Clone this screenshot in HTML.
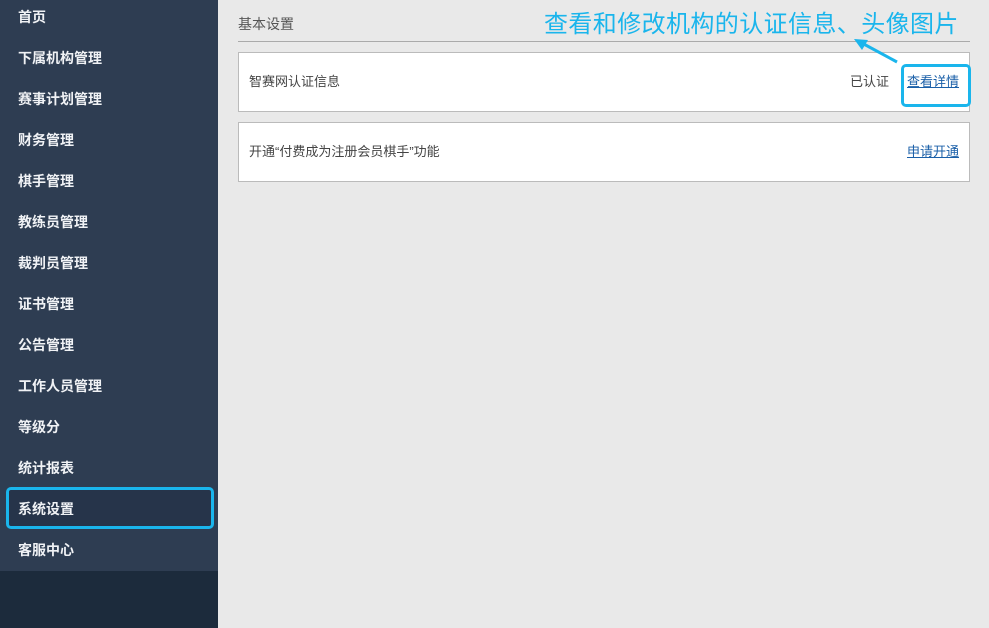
<!DOCTYPE html>
<html><head><meta charset="utf-8"><style>
*{margin:0;padding:0;box-sizing:border-box}
body{width:989px;height:628px;background:#e9e9e9;font-family:"Liberation Sans","Noto Sans CJK SC",sans-serif;position:relative;overflow:hidden}
.side{position:absolute;left:0;top:0;width:218px;height:628px;background:#1c2b3c}
.menu{position:absolute;left:0;top:0;width:218px;height:571px;background:#2e3d52}
.it{position:absolute;left:18px;font-size:14px;font-weight:bold;color:#f0f2f5;line-height:20px}
.sel{position:absolute;left:6px;top:487px;width:208px;height:42px;border:3px solid #1ab5ec;border-radius:5px;background:#26344a}
.main{position:absolute;left:218px;top:0;right:0;bottom:0}
.t{position:absolute;left:20px;top:14px;font-size:14px;color:#555}
.hr{position:absolute;left:20px;top:41px;width:732px;height:1px;background:#aaa}
.card{position:absolute;left:20px;width:732px;height:60px;background:#fff;border:1px solid #bbb;font-size:13px;color:#444}
.card span{position:absolute;top:20px;line-height:18px}
a{color:#1a5fa8;text-decoration:underline}
.note{position:absolute;left:326px;top:8px;font-size:24px;color:#1ab5ec;line-height:34px;letter-spacing:0.4px}
.box{position:absolute;left:901px;top:64px;width:70px;height:43px;border:3px solid #1ab5ec;border-radius:5px}
</style></head><body>
<div class="side"><div class="menu"></div>
<div class="sel"></div>
<div class="it" style="top:7px">首页</div>
<div class="it" style="top:48px">下属机构管理</div>
<div class="it" style="top:89px">赛事计划管理</div>
<div class="it" style="top:130px">财务管理</div>
<div class="it" style="top:171px">棋手管理</div>
<div class="it" style="top:212px">教练员管理</div>
<div class="it" style="top:253px">裁判员管理</div>
<div class="it" style="top:294px">证书管理</div>
<div class="it" style="top:335px">公告管理</div>
<div class="it" style="top:376px">工作人员管理</div>
<div class="it" style="top:417px">等级分</div>
<div class="it" style="top:458px">统计报表</div>
<div class="it" style="top:499px">系统设置</div>
<div class="it" style="top:540px">客服中心</div>
</div>
<div class="main">
<div class="t">基本设置</div>
<div class="hr"></div>
<div class="card" style="top:52px"><span style="left:10px">智赛网认证信息</span><span style="left:611px">已认证</span><span style="left:668px"><a>查看详情</a></span></div>
<div class="card" style="top:122px"><span style="left:10px">开通“付费成为注册会员棋手”功能</span><span style="left:668px"><a>申请开通</a></span></div>
<div class="note">查看和修改机构的认证信息、头像图片</div>
</div>
<div class="box"></div>
<svg style="position:absolute;left:850px;top:36px" width="50" height="30"><line x1="47" y1="26" x2="10" y2="6" stroke="#1ab5ec" stroke-width="3"/><polygon points="4,3 18,4 12,14" fill="#1ab5ec"/></svg>
</body></html>
